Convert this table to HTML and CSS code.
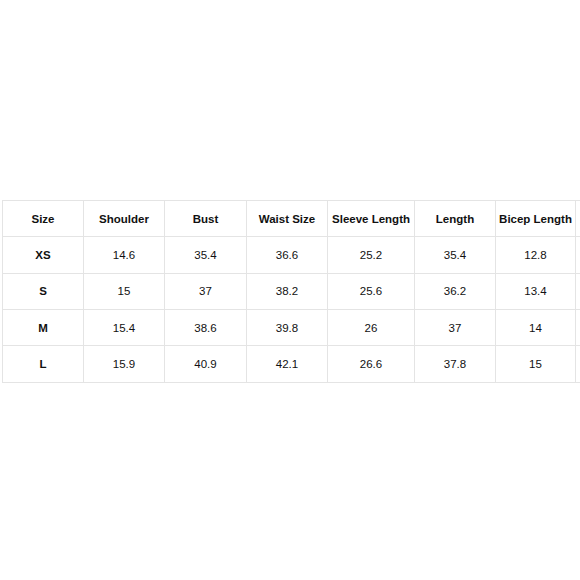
FILE: index.html
```html
<!DOCTYPE html>
<html>
<head>
<meta charset="utf-8">
<link rel="stylesheet" href="styles.css">
</head>
<body>
<div class="page">
  <div class="clip">
    <table class="size-table">
      <colgroup>
        <col class="c1"><col class="c2"><col class="c3"><col class="c4"><col class="c5"><col class="c6"><col class="c7"><col class="c8">
      </colgroup>
      <thead>
        <tr><th>Size</th><th>Shoulder</th><th>Bust</th><th>Waist Size</th><th>Sleeve Length</th><th>Length</th><th>Bicep Length</th><th></th></tr>
      </thead>
      <tbody>
        <tr><th>XS</th><td>14.6</td><td>35.4</td><td>36.6</td><td>25.2</td><td>35.4</td><td>12.8</td><td></td></tr>
        <tr><th>S</th><td>15</td><td>37</td><td>38.2</td><td>25.6</td><td>36.2</td><td>13.4</td><td></td></tr>
        <tr><th>M</th><td>15.4</td><td>38.6</td><td>39.8</td><td>26</td><td>37</td><td>14</td><td></td></tr>
        <tr><th>L</th><td>15.9</td><td>40.9</td><td>42.1</td><td>26.6</td><td>37.8</td><td>15</td><td></td></tr>
      </tbody>
    </table>
  </div>
</div>
</body>
</html>
```

FILE: styles.css
```css
html, body {
  margin: 0;
  padding: 0;
  background: #ffffff;
}
.page {
  width: 580px;
  height: 580px;
  padding-top: 200px;
  box-sizing: border-box;
  overflow: hidden;
}
.clip {
  width: 580px;
  overflow: hidden;
  padding-left: 2px;
  box-sizing: border-box;
}
.size-table {
  border-collapse: collapse;
  table-layout: fixed;
  width: 660px;
  font-family: "Liberation Sans", Arial, sans-serif;
  font-size: 11.5px;
  color: #111111;
}
.c1 { width: 81px; }
.c2 { width: 81px; }
.c3 { width: 82px; }
.c4 { width: 81px; }
.c5 { width: 87px; }
.c6 { width: 81px; }
.c7 { width: 80px; }
.c8 { width: 87px; }
.size-table th,
.size-table td {
  border: 1px solid #e4e4e4;
  height: 35.35px;
  padding: 0;
  text-align: center;
  vertical-align: middle;
  white-space: nowrap;
}
.size-table th {
  font-weight: bold;
}
.size-table td {
  font-weight: normal;
}
```
